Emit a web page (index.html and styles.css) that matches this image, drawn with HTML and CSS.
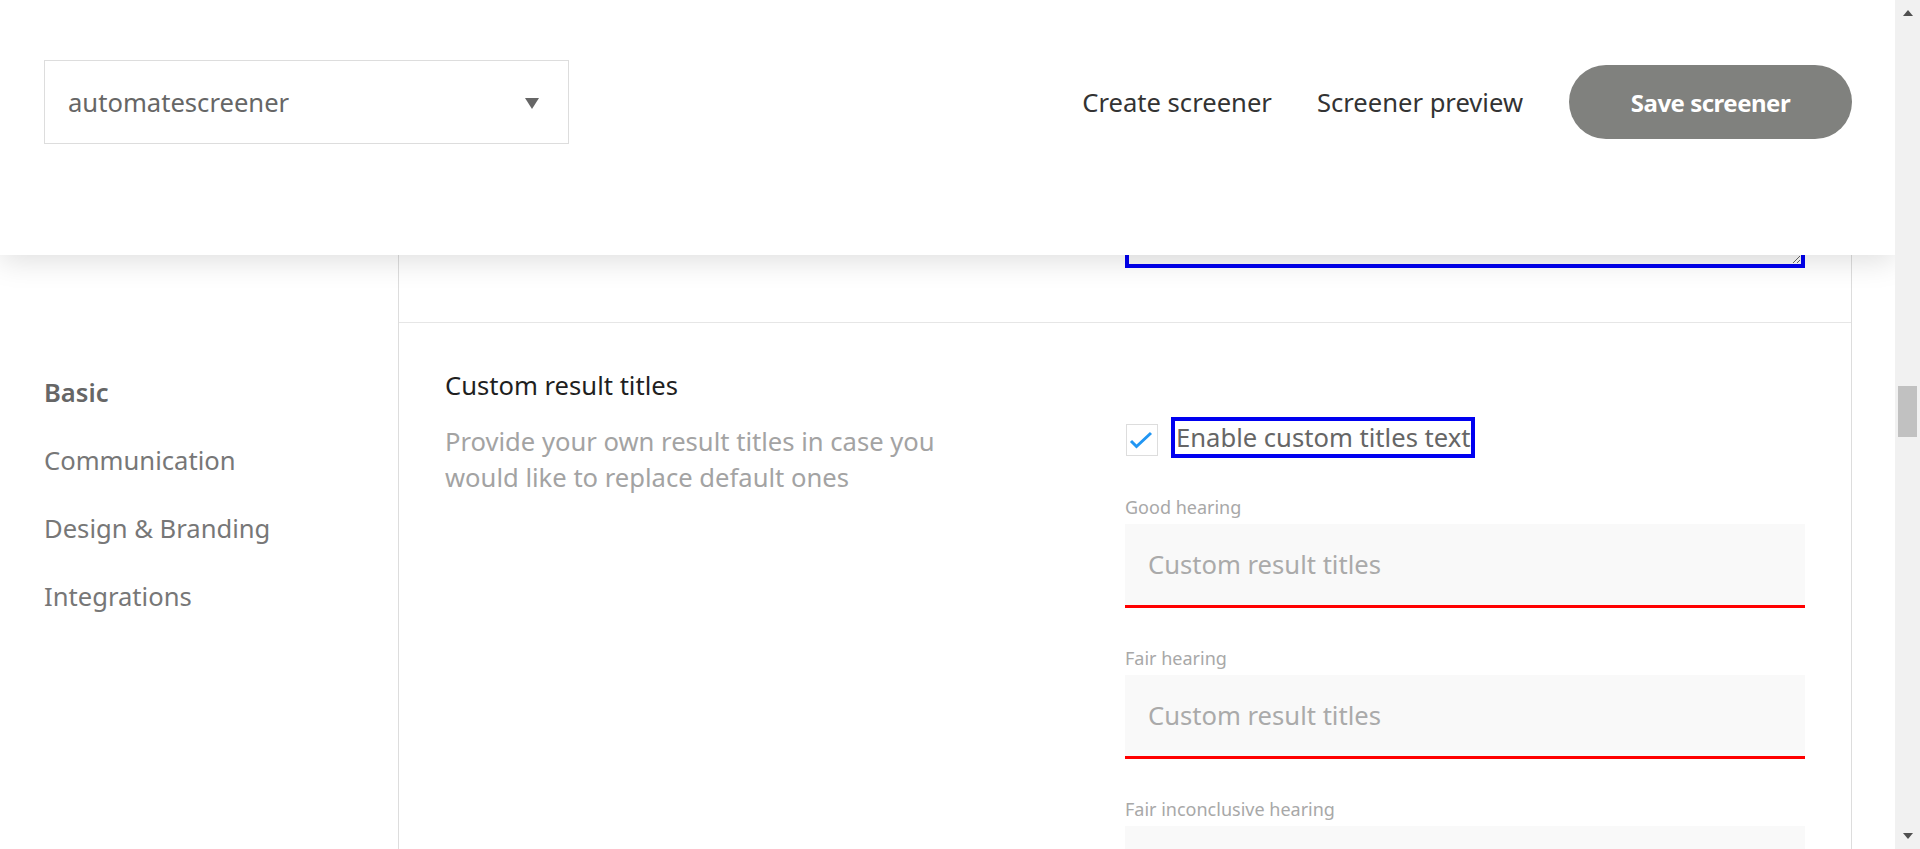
FILE: index.html
```html
<!DOCTYPE html>
<html lang="en">
<head>
<meta charset="utf-8">
<title>Screener settings</title>
<link rel="stylesheet" href="styles.css">
</head>
<body>
<div class="viewport">
  <div class="page">
    <header class="topbar">
      <div class="select">
        <span class="select-value">automatescreener</span>
        <span class="select-arrow"></span>
      </div>
      <nav class="topnav">
        <a class="topnav-link">Create screener</a>
        <a class="topnav-link">Screener preview</a>
        <button class="save-btn">Save screener</button>
      </nav>
    </header>

    <aside class="sidebar">
      <ul class="side-nav">
        <li class="side-item active">Basic</li>
        <li class="side-item">Communication</li>
        <li class="side-item">Design &amp; Branding</li>
        <li class="side-item">Integrations</li>
      </ul>
    </aside>

    <main class="main">
      <section class="setting setting-prev">
        <div class="setting-info"></div>
        <div class="setting-control">
          <textarea class="notes" readonly></textarea>
        </div>
      </section>

      <section class="setting">
        <div class="setting-info">
          <h3 class="setting-title">Custom result titles</h3>
          <p class="setting-desc">Provide your own result titles in case you would like to replace default ones</p>
        </div>
        <div class="setting-control">
          <div class="check-row">
            <span class="checkbox">
              <svg viewBox="0 0 32 32" width="32" height="32"><polyline points="5,17 10.5,22.5 25,9" fill="none" stroke="#2196f3" stroke-width="3"/></svg>
            </span>
            <span class="check-label">Enable custom titles text</span>
          </div>

          <div class="field">
            <label class="field-label">Good hearing</label>
            <input class="field-input" type="text" placeholder="Custom result titles">
          </div>
          <div class="field">
            <label class="field-label">Fair hearing</label>
            <input class="field-input" type="text" placeholder="Custom result titles">
          </div>
          <div class="field">
            <label class="field-label">Fair inconclusive hearing</label>
            <input class="field-input" type="text" placeholder="Custom result titles">
          </div>
        </div>
      </section>
    </main>
    <div class="gutter"></div>
  </div>

  <div class="scrollbar">
    <span class="sb-arrow sb-up"></span>
    <span class="sb-thumb"></span>
    <span class="sb-arrow sb-down"></span>
  </div>
</div>
</body>
</html>
```

FILE: styles.css
```css
* { box-sizing: border-box; }

html, body {
  margin: 0;
  padding: 0;
  height: 100%;
  overflow: hidden;
  background: #ffffff;
  font-family: "Noto Sans", "Open Sans", sans-serif;
}

.viewport {
  display: flex;
  width: 1920px;
  height: 849px;
}

.page {
  position: relative;
  flex: 1;
  display: flex;
  height: 849px;
  overflow: hidden;
}

/* ---------- Header (overlays content) ---------- */
.topbar {
  position: absolute;
  top: 0;
  left: 0;
  right: 0;
  z-index: 10;
  height: 255px;
  background: #ffffff;
  box-shadow: 0 6px 28px rgba(0, 0, 0, 0.13);
  display: flex;
  align-items: flex-start;
  justify-content: space-between;
  padding: 60px 43px 0 44px;
}

.select {
  width: 525px;
  height: 84px;
  border: 1px solid #dddddd;
  display: flex;
  align-items: center;
  justify-content: space-between;
  padding: 0 29px 0 23px;
}

.select-value {
  font-size: 25.6px;
  color: #666666;
  line-height: 34px;
  margin-top: 1px;
}

.select-arrow {
  width: 0;
  height: 0;
  border-left: 7.5px solid transparent;
  border-right: 7.5px solid transparent;
  border-top: 11px solid #666666;
  margin-top: 2px;
}

.topnav {
  display: flex;
  align-items: center;
  height: 84px;
}

.topnav-link {
  font-size: 25.6px;
  color: #333333;
  line-height: 36px;
  margin-top: 1px;
}

.topnav-link:first-child {
  margin-right: 45px;
}

.topnav-link + .topnav-link {
  margin-right: 46px;
}

.save-btn {
  width: 283px;
  height: 74px;
  border: none;
  border-radius: 37px;
  background: #80817e;
  color: #ffffff;
  font-family: "Noto Sans", "Open Sans", sans-serif;
  font-size: 24px;
  font-weight: 700;
  letter-spacing: -0.5px;
  padding: 0;
}

/* ---------- Sidebar ---------- */
.sidebar {
  width: 399px;
  flex: none;
  border-right: 1px solid #dddddd;
  padding: 359px 0 0 44px;
}

.side-nav {
  list-style: none;
  margin: 0;
  padding: 0;
}

.side-item {
  font-size: 25.6px;
  line-height: 68px;
  color: #777777;
}

.side-item.active {
  font-weight: 600;
  color: #666666;
}

/* ---------- Main ---------- */
.main {
  width: 1453px;
  flex: none;
  border-right: 1px solid #dddddd;
}

.gutter {
  flex: 1;
}

.setting {
  display: grid;
  grid-template-columns: 1fr 1fr;
  padding: 45px 46px 0 46px;
  border-bottom: 1px solid #e6e6e6;
}

.setting-prev {
  padding-top: 60px;
  padding-bottom: 54px;
}

.setting:last-child {
  border-bottom: none;
}

.notes {
  display: block;
  width: 100%;
  height: 208px;
  border: 4px solid #0000f0;
  background: #f9f9f9;
  margin: 0;
  outline: none;
}

.setting-title {
  margin: 0;
  font-size: 25.6px;
  font-weight: 400;
  line-height: 36px;
  color: #1f1f1f;
}

.setting-desc {
  margin: 20px 0 0;
  width: 520px;
  font-size: 25.6px;
  line-height: 36px;
  color: #a3a3a3;
}

.setting-control {
  padding-top: 53px;
}

.setting-prev .setting-control {
  padding-top: 0;
}

.check-row {
  display: flex;
  align-items: flex-start;
  height: 33px;
}

.checkbox {
  width: 32px;
  height: 32px;
  margin-top: 3px;
  margin-left: 1px;
  border: 1px solid #dddddd;
  display: flex;
  align-items: center;
  justify-content: center;
}

.checkbox svg {
  display: block;
  flex: none;
}

.check-label {
  margin-left: 17px;
  outline: 4px solid #0000f0;
  padding: 0 1px;
  font-size: 25.6px;
  line-height: 33px;
  color: #666666;
}

.field {
  margin-top: 41px;
}

.field + .field {
  margin-top: 38px;
}

.field-label {
  display: block;
  font-size: 18px;
  line-height: 26px;
  color: #a8a8a8;
  margin-bottom: 4px;
  margin-top: -1px;
}

.field-input {
  display: block;
  width: 100%;
  height: 84px;
  border: none;
  border-bottom: 3px solid #ff0000;
  background: #f9f9f9;
  padding: 0 23px;
  font-family: "Noto Sans", "Open Sans", sans-serif;
  font-size: 25.6px;
  color: #444444;
  outline: none;
}

.field-input::placeholder {
  color: #aaaaaa;
}

/* ---------- Fake scrollbar ---------- */
.scrollbar {
  width: 25px;
  flex: none;
  height: 849px;
  background: #f1f1f1;
  display: flex;
  flex-direction: column;
  align-items: center;
}

.sb-arrow {
  width: 0;
  height: 0;
  border-left: 5.5px solid transparent;
  border-right: 5.5px solid transparent;
}

.sb-up {
  margin-top: 10px;
  border-bottom: 6px solid #505050;
}

.sb-down {
  margin-top: auto;
  margin-bottom: 10px;
  border-top: 6px solid #505050;
}

.sb-thumb {
  width: 19px;
  height: 51px;
  margin-top: 370px;
  background: #c1c1c1;
}
```
